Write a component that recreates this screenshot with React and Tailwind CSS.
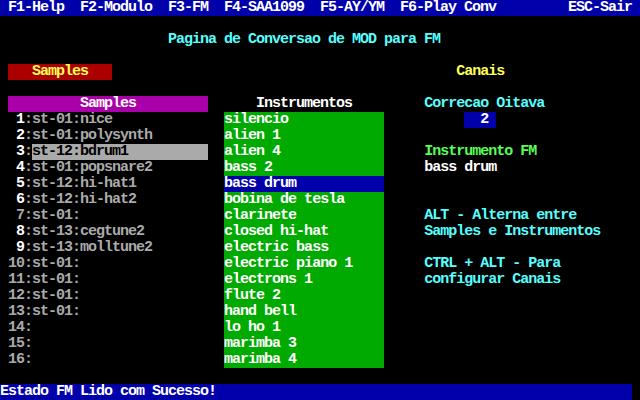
import React from "react";

const pad = (s, n) => s + " ".repeat(Math.max(0, n - s.length));
const lpad = (s, n) => " ".repeat(Math.max(0, n - s.length)) + s;

function Seg({ t, c = "" }) {
  return <span className={"whitespace-pre " + c}>{t}</span>;
}

function Row({ children, c = "" }) {
  return <div className={"flex h-4 w-[640px] " + c}>{children}</div>;
}

const samples = [
  ["1", "st-01:nice", true],
  ["2", "st-01:polysynth", true],
  ["3", "st-12:bdrum1", true],
  ["4", "st-01:popsnare2", true],
  ["5", "st-12:hi-hat1", true],
  ["6", "st-12:hi-hat2", true],
  ["7", "st-01:", false],
  ["8", "st-13:cegtune2", true],
  ["9", "st-13:molltune2", true],
  ["10", "st-01:", false],
  ["11", "st-01:", false],
  ["12", "st-01:", false],
  ["13", "st-01:", false],
  ["14", "", false],
  ["15", "", false],
  ["16", "", false],
];

const instruments = [
  "silencio",
  "alien 1",
  "alien 4",
  "bass 2",
  "bass drum",
  "bobina de tesla",
  "clarinete",
  "closed hi-hat",
  "electric bass",
  "electric piano 1",
  "electrons 1",
  "flute 2",
  "hand bell",
  "lo ho 1",
  "marimba 3",
  "marimba 4",
];

function RightCol({ i }) {
  if (i === 0)
    return (
      <>
        <Seg t="     " />
        <Seg t="  2 " c="bg-[#0000aa] text-white" />
      </>
    );
  if (i === 2) return <Seg t="Instrumento FM" c="text-[#55ff55]" />;
  if (i === 3) return <Seg t="bass drum" c="text-white" />;
  if (i === 6) return <Seg t="ALT - Alterna entre" c="text-[#55ffff]" />;
  if (i === 7) return <Seg t="Samples e Instrumentos" c="text-[#55ffff]" />;
  if (i === 9) return <Seg t="CTRL + ALT - Para" c="text-[#55ffff]" />;
  if (i === 10) return <Seg t="configurar Canais" c="text-[#55ffff]" />;
  return null;
}

export default function App() {
  return (
    <div className="w-[640px] h-[400px] overflow-hidden bg-black text-[#aaaaaa] font-['Liberation_Mono',monospace] font-bold text-[15px] leading-4 tracking-[-1px]">
      <Row c="bg-[#0000aa]">
        <Seg
          t={" F1-Help  F2-Modulo  F3-FM  F4-SAA1099  F5-AY/YM  F6-Play Conv         ESC-Sair "}
          c="text-white"
        />
      </Row>
      <Row />
      <Row>
        <Seg t={" ".repeat(21)} />
        <Seg t="Pagina de Conversao de MOD para FM" c="text-[#55ffff]" />
      </Row>
      <Row />
      <Row>
        <Seg t=" " />
        <Seg t="   Samples   " c="bg-[#aa0000] text-[#ffff55]" />
        <Seg t={" ".repeat(43)} />
        <Seg t="Canais" c="text-[#ffff55]" />
      </Row>
      <Row />
      <Row>
        <Seg t=" " />
        <Seg t="         Samples         " c="bg-[#aa00aa] text-white" />
        <Seg t="  " />
        <Seg t="    Instrumentos    " c="text-white" />
        <Seg t="     " />
        <Seg t="Correcao Oitava" c="text-[#55ffff]" />
      </Row>
      {samples.map(([n, name, bright], i) => (
        <Row key={n}>
          <Seg t=" " />
          <Seg t={lpad(n, 2)} c={bright ? "text-white" : "text-[#aaaaaa]"} />
          <Seg t=":" />
          {i === 2 ? (
            <Seg t={pad(name, 22)} c="bg-[#aaaaaa] text-black" />
          ) : (
            <Seg t={pad(name, 22)} />
          )}
          <Seg t="  " />
          {i === 4 ? (
            <Seg t={pad(instruments[i], 20)} c="bg-[#0000aa] text-white" />
          ) : (
            <Seg t={pad(instruments[i], 20)} c="bg-[#00aa00] text-white" />
          )}
          <Seg t="     " />
          <RightCol i={i} />
        </Row>
      ))}
      <Row />
      <Row>
        <Seg t={pad("Estado FM Lido com Sucesso!", 79)} c="bg-[#0000aa] text-white" />
      </Row>
    </div>
  );
}
